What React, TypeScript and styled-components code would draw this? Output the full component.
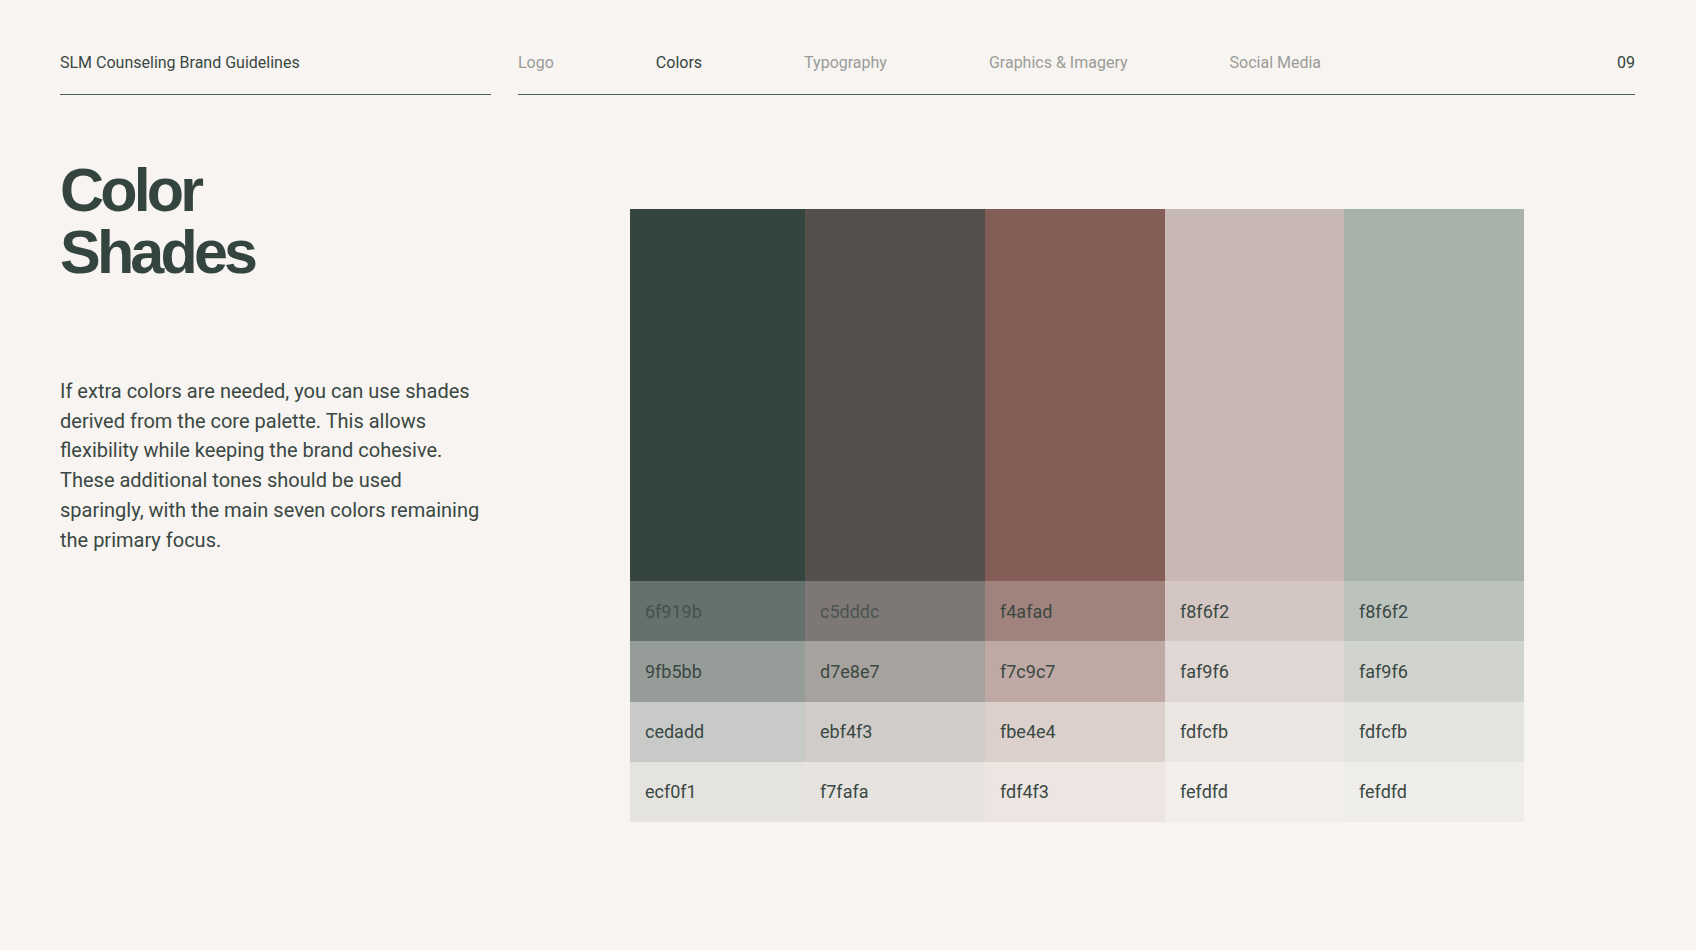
import React from 'react';
import styled, { createGlobalStyle } from 'styled-components';

const GlobalStyle = createGlobalStyle`
  html, body {
    margin: 0;
    padding: 0;
    background: #f7f4f1;
  }
  body {
    font-family: Roboto, 'Noto Sans', sans-serif;
    color: #34443f;
  }
`;

const Page = styled.div`
  width: 1696px;
  height: 950px;
  box-sizing: border-box;
  padding: 51px 60px 0 60px;
  background: #f7f4f1;
  overflow: hidden;
`;

const Header = styled.header`
  display: flex;
  gap: 27px;
`;

const HeaderCell = styled.div<{ $width: number }>`
  width: ${(p) => p.$width}px;
  display: flex;
  align-items: center;
  padding-bottom: 19px;
  border-bottom: 1.5px solid #4f5b57;
  font-size: 16px;
  line-height: 24px;
`;

const BrandName = styled.span`
  color: #3a4843;
`;

const NavItem = styled.span<{ $active?: boolean }>`
  color: ${(p) => (p.$active ? '#34443f' : '#9b9c98')};
  margin-right: 102px;
`;

const PageNumber = styled.span`
  margin-left: auto;
  color: #34443f;
`;

const Main = styled.main`
  display: flex;
  gap: 27px;
  margin-top: 64px;
`;

const Intro = styled.section`
  width: 431px;
  display: flex;
  flex-direction: column;
`;

const Title = styled.h1`
  margin: 0;
  font-family: 'Liberation Sans', Arial, sans-serif;
  font-weight: 700;
  font-size: 61px;
  line-height: 62px;
  letter-spacing: -3.8px;
  color: #34443f;
`;

const Body = styled.p`
  margin: 94px 0 0 0;
  width: 420px;
  font-size: 20px;
  line-height: 29.7px;
  color: #3a4843;
`;

const PaletteArea = styled.section`
  flex: 1;
  display: flex;
  justify-content: center;
  padding-top: 50px;
`;

const Palette = styled.div`
  display: grid;
  grid-template-columns: 175px 180px 180px 179px 180px;
  grid-template-rows: 372px repeat(4, 60.25px);
  grid-auto-flow: column;
`;

const Swatch = styled.div<{ $bg: string; $muted?: boolean }>`
  background: ${(p) => p.$bg};
  display: flex;
  align-items: center;
  padding-left: 15px;
  font-size: 18px;
  color: ${(p) => (p.$muted ? 'rgba(52, 68, 63, 0.7)' : '#3a4843')};
`;

const BG = [247, 244, 241];

const mix = (hex: string, t: number) => {
  const c = [1, 3, 5].map((i) => parseInt(hex.slice(i, i + 2), 16));
  const out = c.map((v, i) => Math.round(v + (BG[i] - v) * t));
  return `rgb(${out.join(',')})`;
};

const steps = [0.25, 0.5, 0.76, 0.9];

const palette = [
  { base: '#344540', shades: ['6f919b', '9fb5bb', 'cedadd', 'ecf0f1'] },
  { base: '#544f4b', shades: ['c5dddc', 'd7e8e7', 'ebf4f3', 'f7fafa'] },
  { base: '#845d57', shades: ['f4afad', 'f7c9c7', 'fbe4e4', 'fdf4f3'] },
  { base: '#c8b8b4', shades: ['f8f6f2', 'faf9f6', 'fdfcfb', 'fefdfd'] },
  { base: '#a8b2aa', shades: ['f8f6f2', 'faf9f6', 'fdfcfb', 'fefdfd'] },
];

const navItems = ['Logo', 'Colors', 'Typography', 'Graphics & Imagery', 'Social Media'];

export default function App() {
  return (
    <>
      <GlobalStyle />
      <Page>
        <Header>
          <HeaderCell $width={431}>
            <BrandName>SLM Counseling Brand Guidelines</BrandName>
          </HeaderCell>
          <HeaderCell $width={1117}>
            {navItems.map((item) => (
              <NavItem key={item} $active={item === 'Colors'}>
                {item}
              </NavItem>
            ))}
            <PageNumber>09</PageNumber>
          </HeaderCell>
        </Header>
        <Main>
          <Intro>
            <Title>
              Color
              <br />
              Shades
            </Title>
            <Body>
              If extra colors are needed, you can use shades derived from the
              core palette. This allows flexibility while keeping the brand
              cohesive. These additional tones should be used sparingly, with
              the main seven colors remaining the primary focus.
            </Body>
          </Intro>
          <PaletteArea>
            <Palette>
              {palette.map((col, ci) => (
                <React.Fragment key={ci}>
                  <Swatch $bg={col.base} />
                  {col.shades.map((label, ri) => (
                    <Swatch
                      key={ri}
                      $bg={mix(col.base, steps[ri])}
                      $muted={ri === 0 && ci < 2}
                    >
                      {label}
                    </Swatch>
                  ))}
                </React.Fragment>
              ))}
            </Palette>
          </PaletteArea>
        </Main>
      </Page>
    </>
  );
}
